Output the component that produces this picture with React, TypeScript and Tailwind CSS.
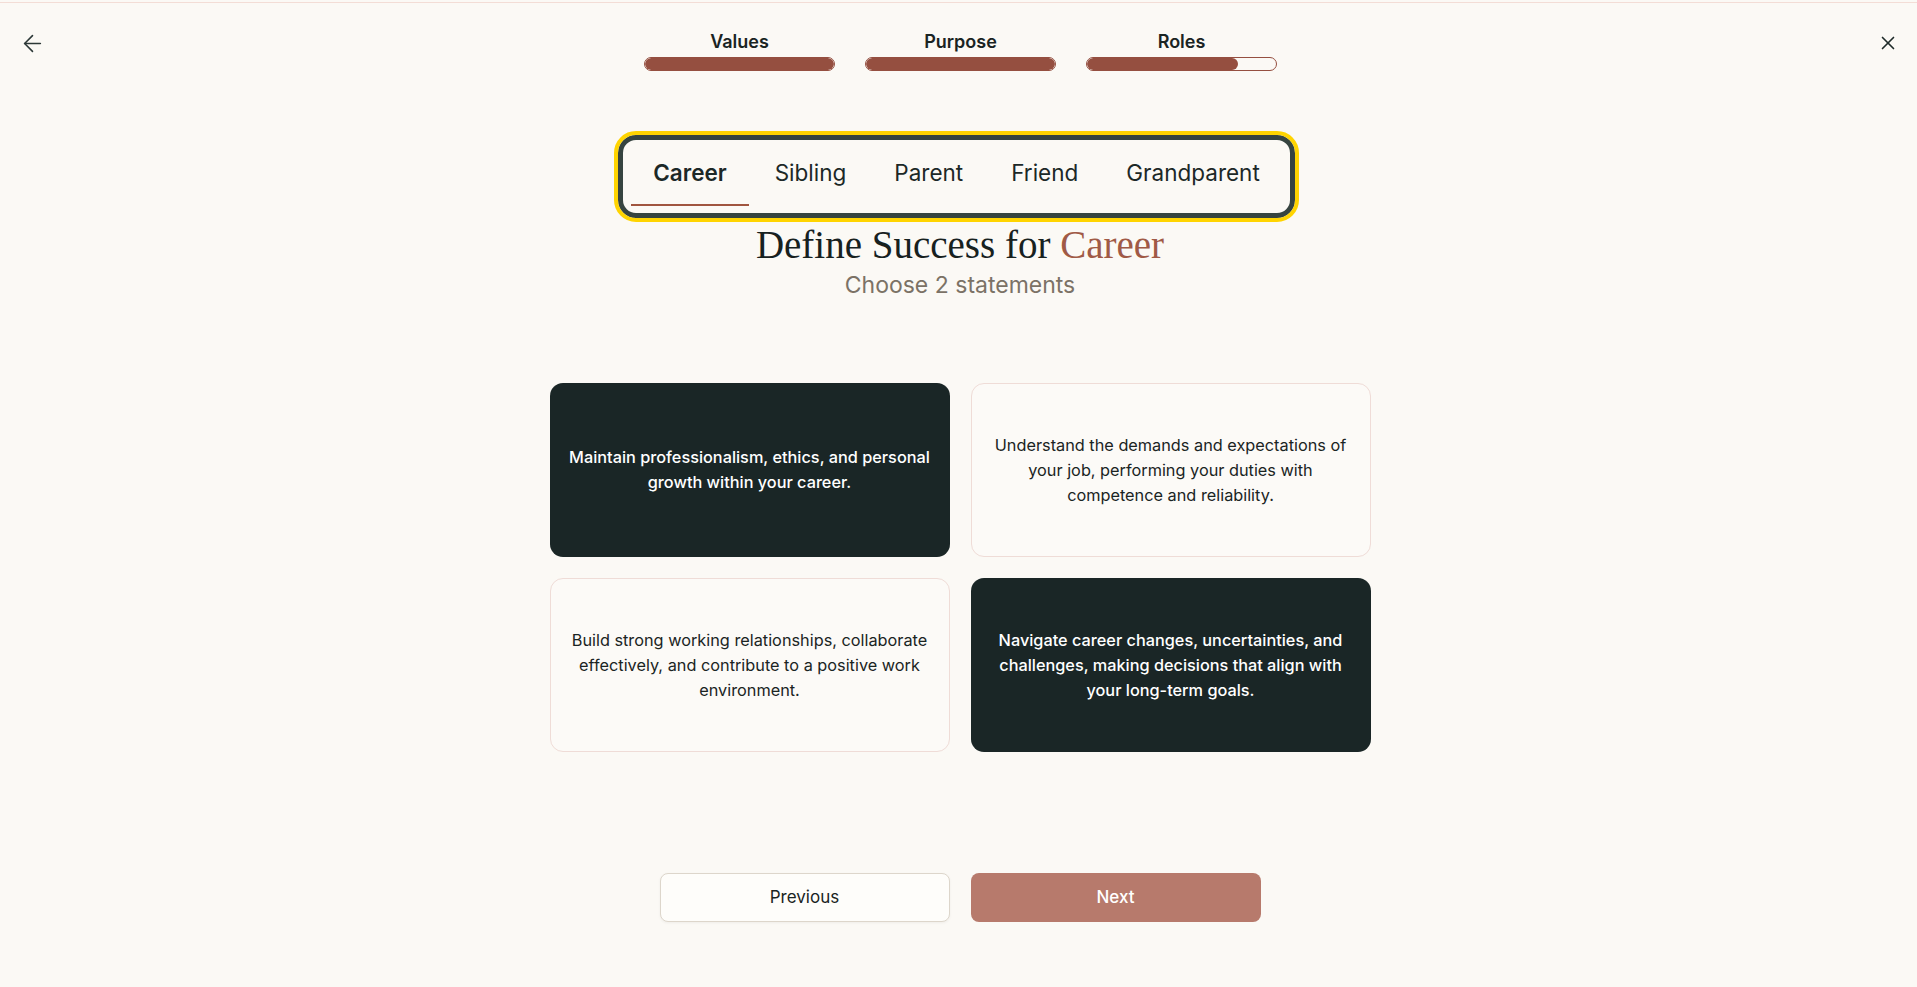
import React from "react";
import { ArrowLeft, X } from "lucide-react";

const steps = [
  { label: "Values", fill: 100 },
  { label: "Purpose", fill: 100 },
  { label: "Roles", fill: 80 },
];

const tabs = ["Career", "Sibling", "Parent", "Friend", "Grandparent"];

const cards = [
  {
    lines: ["Maintain professionalism, ethics, and personal", "growth within your career."],
    selected: true,
  },
  {
    lines: [
      "Understand the demands and expectations of",
      "your job, performing your duties with",
      "competence and reliability.",
    ],
    selected: false,
  },
  {
    lines: [
      "Build strong working relationships, collaborate",
      "effectively, and contribute to a positive work",
      "environment.",
    ],
    selected: false,
  },
  {
    lines: [
      "Navigate career changes, uncertainties, and",
      "challenges, making decisions that align with",
      "your long-term goals.",
    ],
    selected: true,
  },
];

export default function App() {
  return (
    <div className="min-h-screen bg-[#fbf9f5] text-[#1a2423] font-['Inter','Noto_Sans',sans-serif]">
      <div className="h-[3px] border-b border-[#f3ddd6]" />
      <header className="grid grid-cols-[1fr_auto_1fr] items-start pl-[4px] pt-[27px]">
        <div className="flex justify-start">
          <button className="ml-[15px] mt-[0px] text-[#2c3837]" aria-label="Back">
            <ArrowLeft size={27} strokeWidth={1.4} />
          </button>
        </div>
        <div className="flex gap-[30px]">
          {steps.map((s) => (
            <div key={s.label} className="flex w-[191px] flex-col items-center">
              <span className="text-[18px] font-semibold leading-[24px] text-[#1a2423]">{s.label}</span>
              <div className="mt-[3px] h-[14px] w-full overflow-hidden rounded-full border border-[#954f40]">
                <div className="h-full rounded-full bg-[#954f40]" style={{ width: `${s.fill}%` }} />
              </div>
            </div>
          ))}
        </div>
        <div className="flex justify-end">
          <button className="mr-[18px] mt-[2px] text-[#1f2b2a]" aria-label="Close">
            <X size={22} strokeWidth={1.8} />
          </button>
        </div>
      </header>

      <main className="flex flex-col items-center pl-[3px]">
        <div className="mr-[7px] mt-[64px] flex gap-[4px] rounded-[18px] border-[5px] border-[#364440] px-[8px] py-[7px] outline-4 outline-solid outline-[#ffd400]">
          {tabs.map((t, i) => (
            <button
              key={t}
              className={
                i === 0
                  ? "border-b-2 border-[#a0553f] px-[22px] pb-[16px] pt-[11px] text-[22.5px] font-semibold leading-[30px] text-[#1c2827]"
                  : "border-b-2 border-transparent px-[22px] pb-[16px] pt-[11px] text-[22.5px] font-normal leading-[30px] text-[#1c2827]"
              }
            >
              {t}
            </button>
          ))}
        </div>

        <h1 className="mt-[3px] text-[39px] font-normal leading-[48px] text-[#17211f] font-['Liberation_Serif','Times_New_Roman',serif]">
          Define Success for <span className="text-[#a05a46]">Career</span>
        </h1>
        <p className="text-[23px] leading-[32px] text-[#7b7266]">Choose 2 statements</p>

        <div className="mt-[82px] grid grid-cols-[400px_400px] gap-[21px]">
          {cards.map((c, i) => (
            <div
              key={i}
              className={
                c.selected
                  ? "flex h-[174px] items-center justify-center rounded-[13px] bg-[#1a2626] px-[4px] text-center text-[16.3px] font-medium leading-[25px] text-white"
                  : "flex h-[174px] items-center justify-center rounded-[13px] border border-[#efdcd7] bg-[#fcfaf7] px-[4px] text-center text-[16.3px] font-normal leading-[25px] text-[#1a2423]"
              }
            >
              <p>
                {c.lines.map((l, j) => (
                  <React.Fragment key={j}>
                    {l}
                    {j < c.lines.length - 1 && <br />}
                  </React.Fragment>
                ))}
              </p>
            </div>
          ))}
        </div>

        <div className="mt-[121px] flex gap-[21px]">
          <button className="h-[49px] w-[290px] rounded-[8px] border border-[#ddd6cb] bg-[#fefdfa] text-[17px] font-normal text-[#1a2423] shadow-[0_1px_3px_rgba(0,0,0,0.05)]">
            Previous
          </button>
          <button className="h-[49px] w-[290px] rounded-[8px] bg-[#b77a6c] text-[17px] font-medium text-white">
            Next
          </button>
        </div>
      </main>
    </div>
  );
}
